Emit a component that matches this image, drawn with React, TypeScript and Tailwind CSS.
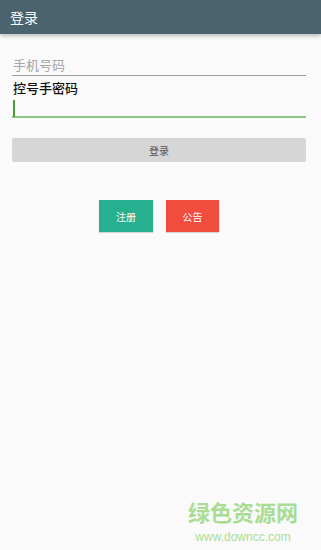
export default function App() {
  const font = { fontFamily: '"Noto Sans CJK SC", "Noto Sans", Roboto, sans-serif' };
  return (
    <div className="w-[321px] h-[550px] bg-[#fafafa] flex flex-col relative overflow-hidden" style={font}>
      <div className="h-[34px] bg-[#4b636e] flex items-center px-[10px] shadow-[0_2px_4px_rgba(0,0,0,0.25)] z-10">
        <span className="text-white text-[14px] leading-none">登录</span>
      </div>
      <div className="pl-[12px] pr-[15px] pt-[21px] flex flex-col">
        <div className="h-[21px] flex items-end border-b border-[#9e9e9e] pb-[1px]">
          <span className="text-[13px] leading-[18px] text-[#a5a5a5] pl-[1px]">手机号码</span>
        </div>
        <div className="pt-[3px] pl-[1px] text-[13px] leading-[18px] text-[#111] font-medium">控号手密码</div>
        <div className="h-[21px] pt-[3px] pl-[1px] border-b-2 border-[#8dc67e]">
          <div className="w-[2px] h-[17px] bg-[#4e9a3a]"></div>
        </div>
        <div className="mt-[20px] h-[24px] bg-[#d6d6d6] rounded-[2px] flex items-center justify-center">
          <span className="text-[10px] text-[#555]">登录</span>
        </div>
        <div className="mt-[38px] flex justify-center gap-[13px]">
          <div className="w-[54px] h-[32px] bg-[#27b08f] flex items-center justify-center shadow-[0_1px_1px_rgba(0,0,0,0.15)]">
            <span className="text-white text-[10px]">注册</span>
          </div>
          <div className="w-[53px] h-[32px] bg-[#f04d3e] flex items-center justify-center shadow-[0_1px_1px_rgba(0,0,0,0.15)]">
            <span className="text-white text-[10px]">公告</span>
          </div>
        </div>
      </div>
      <div className="absolute left-[186px] top-[498px] flex flex-col items-center w-[114px]">
        <span className="text-[22px] leading-[26px] font-bold text-[#a9dd93]">绿色资源网</span>
        <span className="mt-[6px] text-[12px] leading-[14px] text-[#a9dd93]" style={{ fontFamily: '"Liberation Sans", Arial, sans-serif' }}>www.downcc.com</span>
      </div>
    </div>
  );
}
